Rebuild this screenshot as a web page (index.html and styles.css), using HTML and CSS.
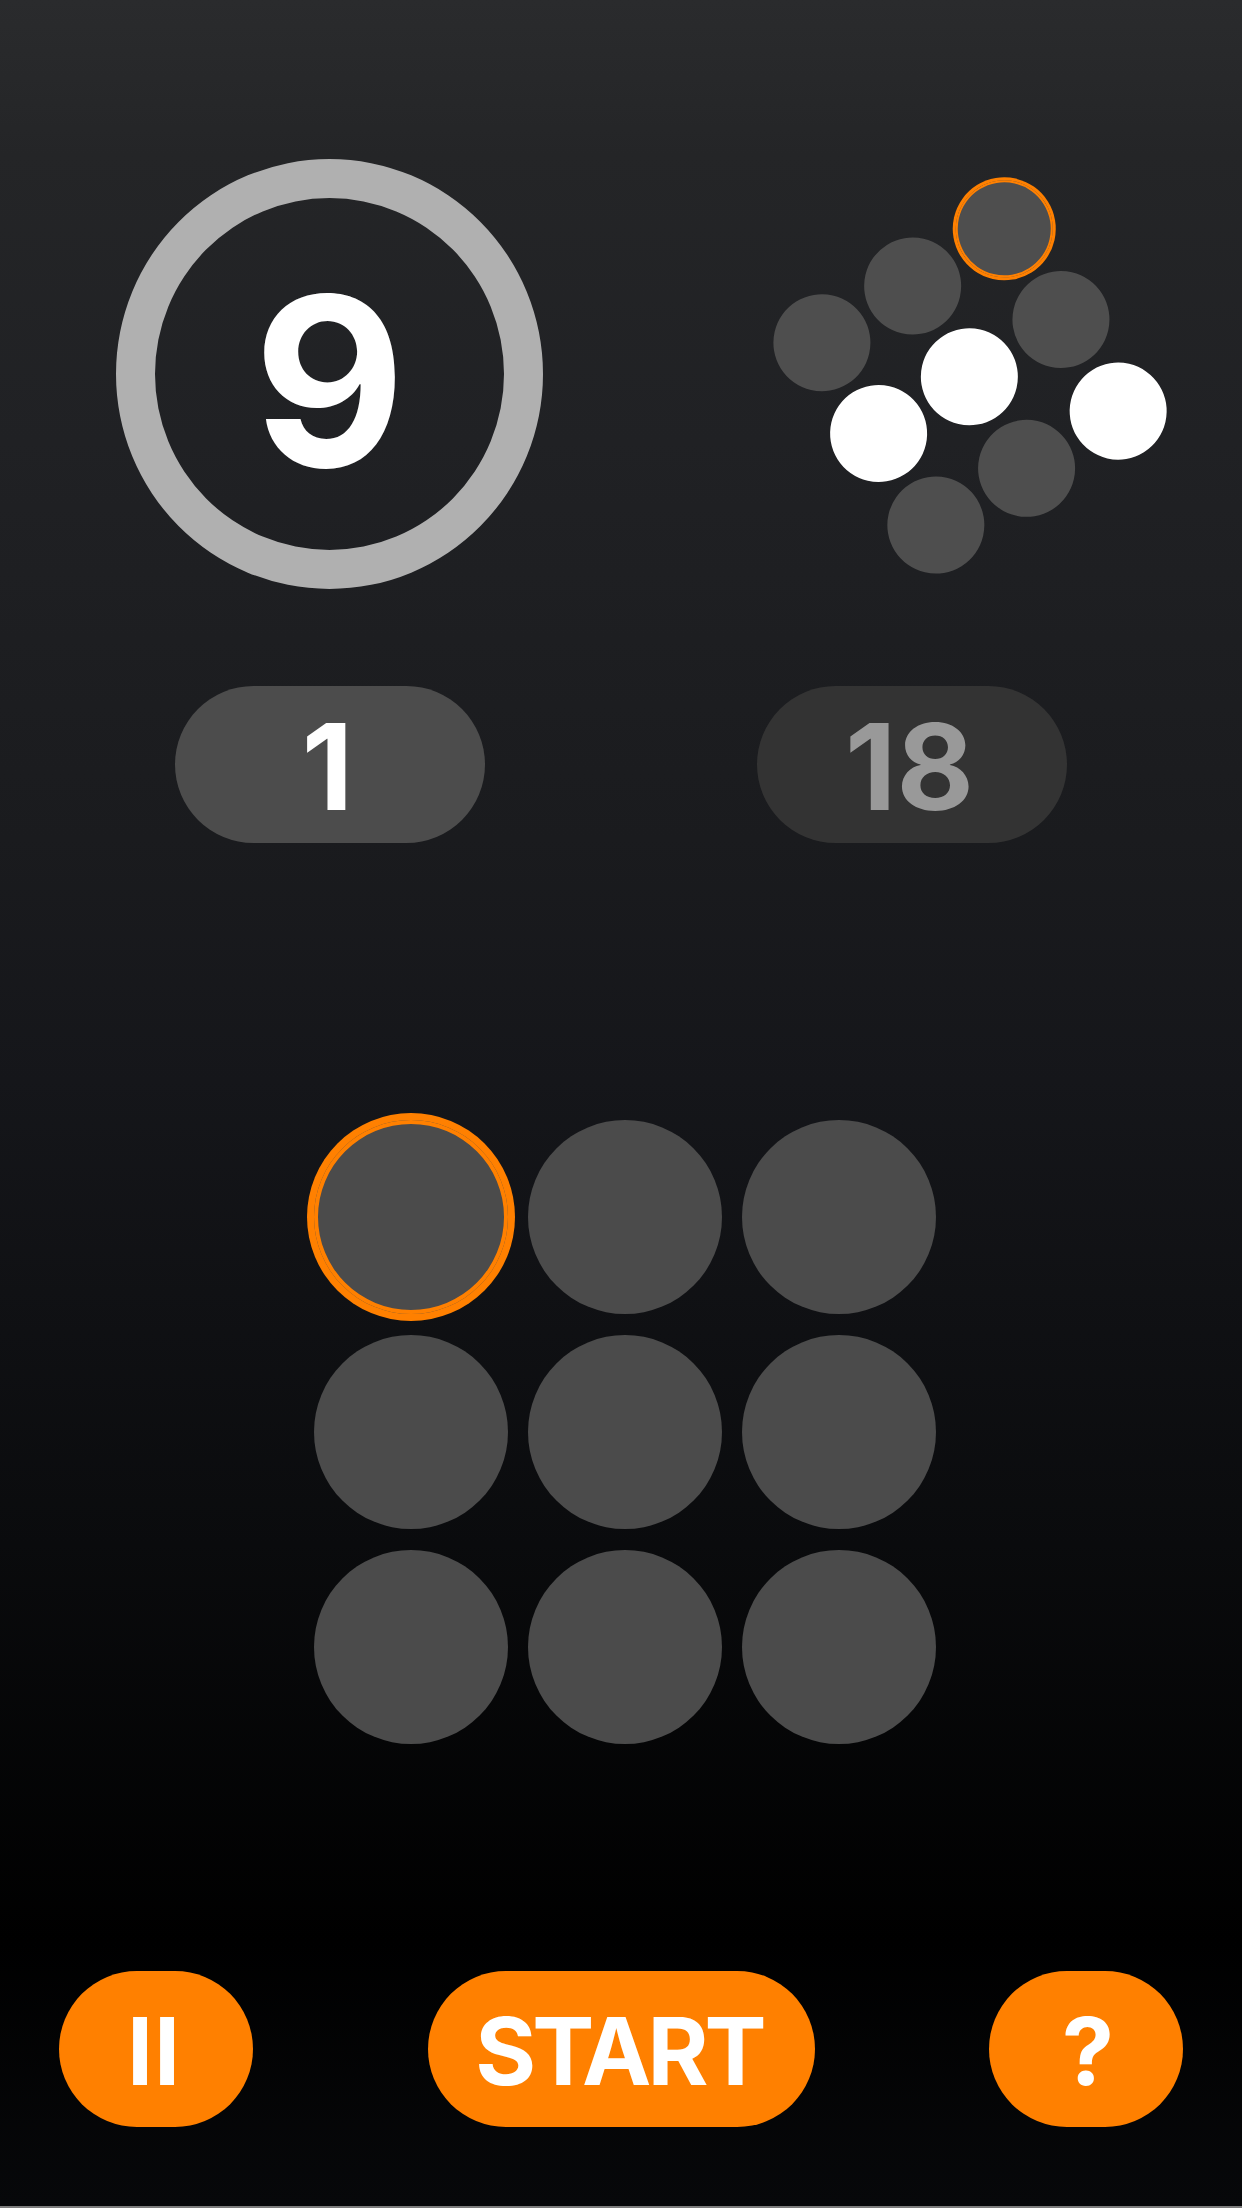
FILE: index.html
```html
<!DOCTYPE html>
<html lang="en">
<head>
<meta charset="utf-8">
<title>Memory game</title>
<link rel="stylesheet" href="styles.css">
</head>
<body>
<main class="screen">
  <section class="top">
    <div class="timer">9</div>
    <div class="mini-wrap">
      <div class="mini-grid">
        <span class="mini"></span><span class="mini"></span><span class="mini mini-cur"></span>
        <span class="mini on"></span><span class="mini on"></span><span class="mini"></span>
        <span class="mini"></span><span class="mini"></span><span class="mini on"></span>
      </div>
    </div>
  </section>
  <section class="scores">
    <div class="score">1</div>
    <div class="score dim">18</div>
  </section>
  <section class="board">
    <span class="cell cur"></span><span class="cell"></span><span class="cell"></span>
    <span class="cell"></span><span class="cell"></span><span class="cell"></span>
    <span class="cell"></span><span class="cell"></span><span class="cell"></span>
  </section>
  <section class="controls">
    <button class="btn pause">II</button>
    <button class="btn wide">START</button>
    <button class="btn">?</button>
  </section>
</main>
</body>
</html>
```
FILE: styles.css
```css
* { box-sizing: border-box; }
html, body { margin: 0; padding: 0; }
body { width: 1242px; height: 2208px; overflow: hidden; background: #000; }
.screen {
  width: 1242px;
  height: 2208px;
  background: linear-gradient(180deg, #2a2b2d 0%, #242527 7%, #202124 20%, #1a1b1e 38%, #15161a 49%, #0a0b0d 70%, #000 88%, #07080a 99.9%);
  font-family: Inter, "Liberation Sans", sans-serif;
  font-weight: 700;
  color: #fff;
  display: flex;
  flex-direction: column;
  border-bottom: 2px solid #7d7d7d;
}
.top {
  display: flex;
  padding: 159px 0 0 116px;
  height: 590px;
}
.timer {
  width: 427px;
  height: 430px;
  border: 39px solid #b0b0b0;
  border-radius: 50%;
  font-size: 234px;
  line-height: 365px;
  text-align: center;
}
.mini-wrap { margin: 0 0 0 271px; }
.mini-grid {
  display: grid;
  grid-template-columns: repeat(3, 97px);
  grid-auto-rows: 97px;
  gap: 10.4px;
  width: 311.8px;
  transform: rotate(-32deg);
  margin-top: 62px;
}
.mini { border-radius: 50%; background: #4e4e4e; }
.mini.on { background: #fff; }
.mini-cur { box-shadow: 0 0 0 3px #ff8000, inset 0 0 0 2px #ff8000; }
.scores {
  display: flex;
  gap: 272px;
  padding: 96px 0 0 175px;
  height: 252px;
}
.score {
  width: 310px;
  height: 157px;
  border-radius: 78.5px;
  background: #4c4c4c;
  font-size: 119px;
  line-height: 162px;
  padding-right: 5px;
  text-align: center;
}
.score.dim { background: #333; color: #999; }
.board {
  display: grid;
  grid-template-columns: repeat(3, 194px);
  grid-auto-rows: 194px;
  column-gap: 20px;
  row-gap: 21px;
  padding: 0 0 0 314px;
  margin-top: 278px;
}
.cell { border-radius: 50%; background: #4b4b4b; }
.cell.cur { box-shadow: 0 0 0 7px #ff8000, inset 0 0 0 4px #ff8000; }
.controls {
  display: flex;
  justify-content: space-between;
  padding: 0 59px;
  margin-top: 227px;
}
.btn {
  width: 194px;
  height: 156px;
  border: 0;
  padding: 0;
  border-radius: 78px;
  background: #ff8000;
  color: #fff;
  font: 700 93px/161px Inter, "Liberation Sans", sans-serif;
  letter-spacing: -4px;
  text-align: center;
}
.btn.pause { letter-spacing: 1px; padding-right: 4px; }
.btn.wide { width: 387px; padding-right: 4px; }
```
